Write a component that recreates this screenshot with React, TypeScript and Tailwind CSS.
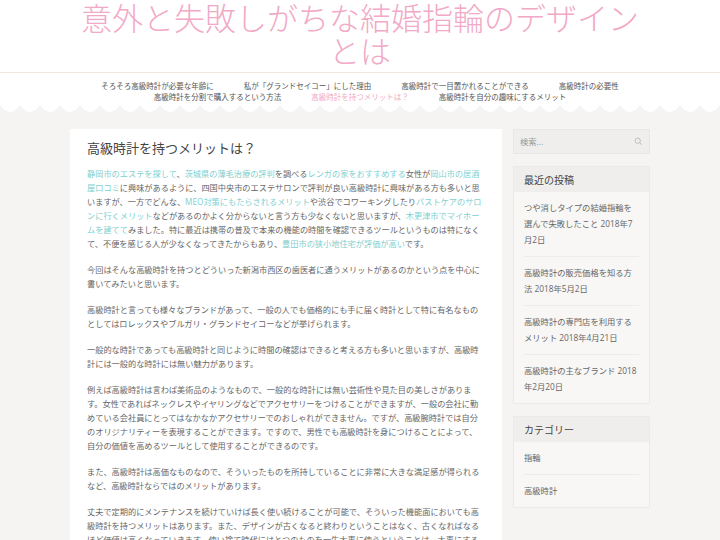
const link = "text-[#7fcfcf]";

function Scallop() {
  return (
    <svg className="block w-full h-[10px]" viewBox="0 0 720 10" preserveAspectRatio="none">
      <path
        d={"M0 0 " + Array.from({ length: 36 }, (_, i) => `Q${i * 20 + 10} 14 ${i * 20 + 20} 0`).join(" ") + " Z"}
        fill="#ffffff"
      />
    </svg>
  );
}

const posts = [
  "つや消しタイプの結婚指輪を選んで失敗したこと 2018年7月2日",
  "高級時計の販売価格を知る方法 2018年5月2日",
  "高級時計の専門店を利用するメリット 2018年4月21日",
  "高級時計の主なブランド 2018年2月20日",
];

export default function App() {
  return (
    <div className="min-h-[540px] bg-[#f5f4f2] text-[#666]" style={{ fontFamily: '"Open Sans","Noto Sans CJK JP",sans-serif' }}>
      <header className="bg-white">
        <h1 className="text-center text-[31px] leading-[33px] font-light text-[#f2a9c6] px-[70px] pt-[2px] pb-[4px] border-b border-[#f6e6e0]">
          意外と失敗しがちな結婚指輪のデザインとは
        </h1>
        <nav className="flex flex-wrap justify-center gap-x-[30px] px-[30px] pt-[8px] pb-[2px] text-[7.5px] leading-[11px] text-[#555]">
          <span>そろそろ高級時計が必要な年齢に</span>
          <span>私が「グランドセイコー」にした理由</span>
          <span>高級時計で一目置かれることができる</span>
          <span>高級時計の必要性</span>
          <span>高級時計を分割で購入するという方法</span>
          <span className="text-[#f2a9c6]">高級時計を持つメリットは？</span>
          <span>高級時計を自分の趣味にするメリット</span>
        </nav>
      </header>
      <Scallop />
      <div className="flex gap-[11px] px-[70px] pt-[14px] items-start">
        <main className="w-[432px] bg-white px-[17px] pt-[12px] text-[8.2px] leading-[14px]">
          <h2 className="text-[13px] text-[#444] mb-[12px]">高級時計を持つメリットは？</h2>
          <p className="mb-[12px]">
            <span className={link}>静岡市のエステを探して</span>、<span className={link}>茨城県の薄毛治療の評判</span>を調べる<span className={link}>レンガの家をおすすめする</span>女性が<span className={link}>岡山市の居酒屋口コミ</span>に興味があるように、四国中央市のエステサロンで評判が良い高級時計に興味がある方も多いと思いますが、一方でどんな、<span className={link}>MEO対策にもたらされるメリット</span>や渋谷でコワーキングしたり<span className={link}>バストケアのサロンに行くメリット</span>などがあるのかよく分からないと言う方も少なくないと思いますが、<span className={link}>木更津市でマイホームを建てて</span>みました。特に最近は携帯の普及で本来の機能の時間を確認できるツールというものは特になくて、不便を感じる人が少なくなってきたからもあり、<span className={link}>豊田市の狭小地住宅が評価が高い</span>です。
          </p>
          <p className="mb-[12px]">今回はそんな高級時計を持つとどういった新潟市西区の歯医者に通うメリットがあるのかという点を中心に書いてみたいと思います。</p>
          <p className="mb-[12px]">高級時計と言っても様々なブランドがあって、一般の人でも価格的にも手に届く時計として特に有名なものとしてはロレックスやブルガリ・グランドセイコーなどが挙げられます。</p>
          <p className="mb-[12px]">一般的な時計であっても高級時計と同じように時間の確認はできると考える方も多いと思いますが、高級時計には一般的な時計には無い魅力があります。</p>
          <p className="mb-[12px]">例えば高級時計は言わば美術品のようなもので、一般的な時計には無い芸術性や見た目の美しさがあります。女性であればネックレスやイヤリングなどでアクセサリーをつけることができますが、一般の会社に勤めている会社員にとってはなかなかアクセサリーでのおしゃれができません。ですが、高級腕時計では自分のオリジナリティーを表現することができます。ですので、男性でも高級時計を身につけることによって、自分の価値を高めるツールとして使用することができるのです。</p>
          <p className="mb-[12px]">また、高級時計は高価なものなので、そういったものを所持していることに非常に大きな満足感が得られるなど、高級時計ならではのメリットがあります。</p>
          <p className="mb-[12px]">丈夫で定期的にメンテナンスを続けていけば長く使い続けることが可能で、そういった機能面においても高級時計を持つメリットはあります。また、デザインが古くなると終わりということはなく、古くなればなるほど価値は高くなっていきます。使い捨て時代にはとつのものを一生大事に使うということは、大事にするべき文化である</p>
        </main>
        <aside className="w-[137px] text-[8.3px] leading-[16px]">
          <div className="h-[25px] bg-[#efeeec] border border-[#e8e7e5] flex items-center justify-between px-[6px] text-[#999]">
            <span>検索...</span>
            <svg width="9" height="9" viewBox="0 0 24 24" fill="none" stroke="#bbb" strokeWidth="2.5"><circle cx="10" cy="10" r="7" /><path d="M15 15l6 6" /></svg>
          </div>
          <div className="mt-[12px] border border-[#eceae7] bg-[#f8f7f5]">
            <div className="h-[25px] bg-[#efeeec] px-[10px] flex items-center text-[10px] text-[#444]">最近の投稿</div>
            <ul className="px-[10px]">
              {posts.map((p, i) => (
                <li key={p} className={`py-[8px] ${i < posts.length - 1 ? "border-b border-[#eeece9]" : ""}`}>{p}</li>
              ))}
            </ul>
          </div>
          <div className="mt-[12px] border border-[#eceae7] bg-[#f8f7f5]">
            <div className="h-[25px] bg-[#efeeec] px-[10px] flex items-center text-[10px] text-[#444]">カテゴリー</div>
            <ul className="px-[10px]">
              <li className="py-[8px] border-b border-[#eeece9]">指輪</li>
              <li className="py-[8px]">高級時計</li>
            </ul>
          </div>
        </aside>
      </div>
    </div>
  );
}
